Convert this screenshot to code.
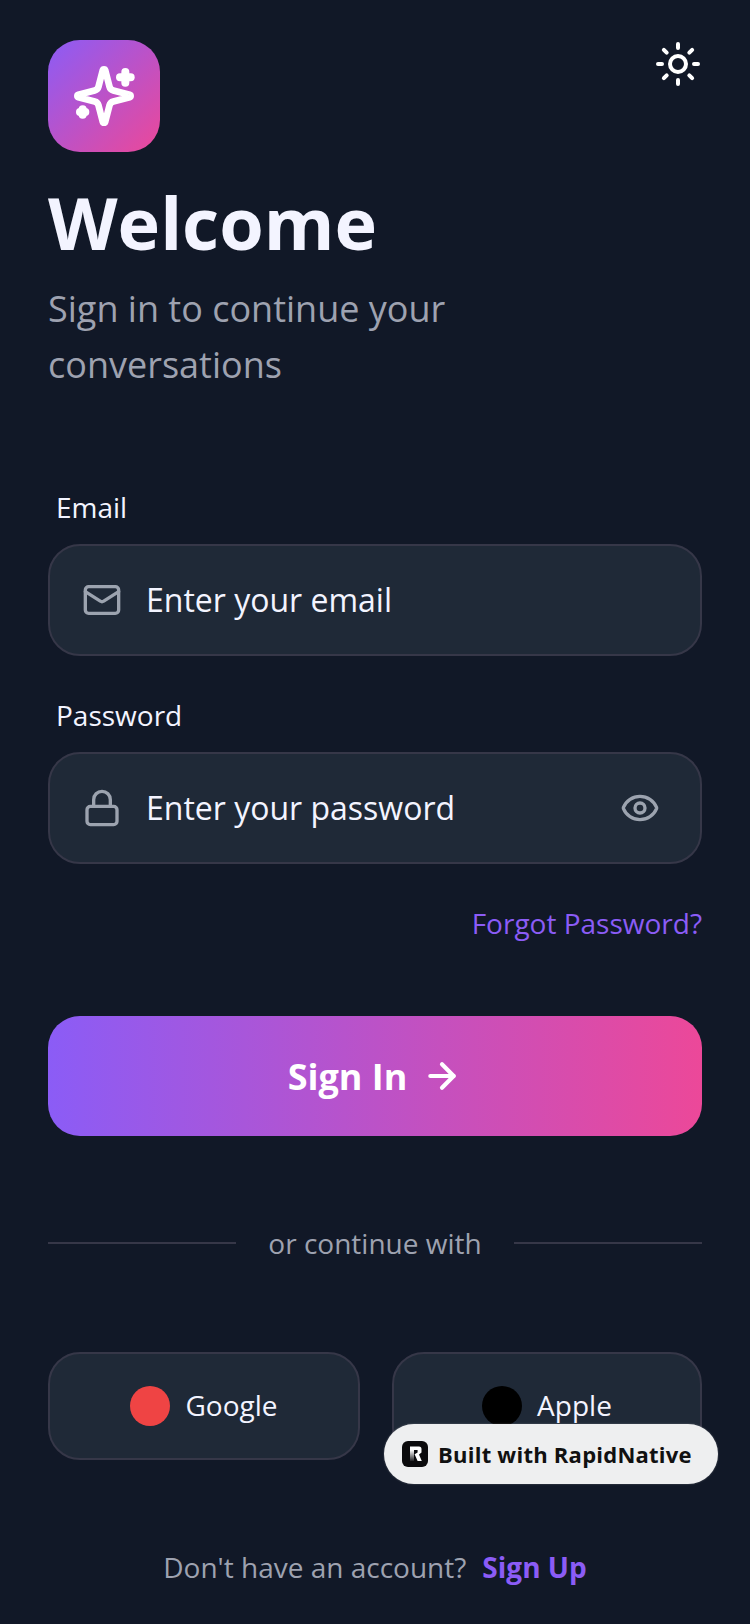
<script>
</script>

<div class="page">
  <div class="top">
    <div class="logo">
      <svg width="64" height="64" viewBox="0 0 24 24" fill="none" stroke="#fff" stroke-width="2.5" stroke-linecap="round" stroke-linejoin="round">
        <path d="M9.94 15.5A2 2 0 0 0 8.5 14.06l-6.14-1.58a.5.5 0 0 1 0-.96L8.5 9.94A2 2 0 0 0 9.94 8.5l1.58-6.14a.5.5 0 0 1 .96 0L14.06 8.5A2 2 0 0 0 15.5 9.94l6.14 1.58a.5.5 0 0 1 0 .96L15.5 14.06a2 2 0 0 0-1.44 1.44l-1.58 6.14a.5.5 0 0 1-.96 0z"/>
        <path d="M20 3v4" stroke-width="3"/><path d="M22 5h-4" stroke-width="3"/><path d="M4 17v2" stroke-width="3"/><path d="M5 18H3" stroke-width="3"/>
      </svg>
    </div>
    <svg width="48" height="48" viewBox="0 0 24 24" fill="none" stroke="#fff" stroke-width="2" stroke-linecap="round" stroke-linejoin="round">
      <circle cx="12" cy="12" r="4"/>
      <path d="M12 2v2M12 20v2M4.93 4.93l1.41 1.41M17.66 17.66l1.41 1.41M2 12h2M20 12h2M6.34 17.66l-1.41 1.41M19.07 4.93l-1.41 1.41"/>
    </svg>
  </div>

  <h1>Welcome</h1>
  <p class="sub">Sign in to continue your<br />conversations</p>

  <div class="form">
    <div class="label">Email</div>
    <div class="field">
      <svg width="40" height="40" viewBox="0 0 24 24" fill="none" stroke="#9ca3af" stroke-width="2" stroke-linecap="round" stroke-linejoin="round">
        <rect x="2" y="4" width="20" height="16" rx="2"/><path d="m22 7-8.97 5.7a1.94 1.94 0 0 1-2.06 0L2 7"/>
      </svg>
      <span class="ph">Enter your email</span>
    </div>
    <div class="label second">Password</div>
    <div class="field">
      <svg width="40" height="40" viewBox="0 0 24 24" fill="none" stroke="#9ca3af" stroke-width="2" stroke-linecap="round" stroke-linejoin="round">
        <rect x="3" y="11" width="18" height="11" rx="2"/><path d="M7 11V7a5 5 0 0 1 10 0v4"/>
      </svg>
      <span class="ph">Enter your password</span>
      <svg width="40" height="40" viewBox="0 0 24 24" fill="none" stroke="#9ca3af" stroke-width="2" stroke-linecap="round" stroke-linejoin="round">
        <path d="M2.06 12.35a1 1 0 0 1 0-.7 10.75 10.75 0 0 1 19.88 0 1 1 0 0 1 0 .7 10.75 10.75 0 0 1-19.88 0"/><circle cx="12" cy="12" r="3"/>
      </svg>
    </div>
    <div class="forgot">Forgot Password?</div>
  </div>

  <div class="signin">
    <span>Sign In</span>
    <svg width="40" height="40" viewBox="0 0 24 24" fill="none" stroke="#fff" stroke-width="2.5" stroke-linecap="round" stroke-linejoin="round">
      <path d="M5 12h14"/><path d="m12 5 7 7-7 7"/>
    </svg>
  </div>

  <div class="divider"><i></i><span>or continue with</span><i></i></div>

  <div class="social">
    <div class="sbtn"><b class="dot red"></b><span>Google</span></div>
    <div class="sbtn"><b class="dot black"></b><span>Apple</span></div>
  </div>

  <div class="foot"><span>Don't have an account?</span><strong>Sign Up</strong></div>

  <div class="badge">
    <svg width="26" height="26" viewBox="0 0 26 26">
      <defs>
        <linearGradient id="stem" x1="0" y1="0" x2="0" y2="1">
          <stop offset="0" stop-color="#fff" />
          <stop offset="1" stop-color="#fff" stop-opacity="0.1" />
        </linearGradient>
      </defs>
      <rect width="26" height="26" rx="6" fill="#0b0b0d"/>
      <path d="M8 9h4v11H8z" fill="url(#stem)"/>
      <path d="M8 5.500h9q2.500 0 2.500 2.500v3.500L17 13.500l2.800 6.500h-4.200l-3-6.800 3-1.700V9H8z" fill="#fff"/>
    </svg>
    <span>Built with RapidNative</span>
  </div>
</div>

<style>
  :global(body) {
    margin: 0;
    background: #111827;
  }
  .page {
    position: relative;
    width: 750px;
    height: 1624px;
    box-sizing: border-box;
    padding: 40px 48px 0;
    background: #111827;
    font-family: "Open Sans", "Noto Sans", sans-serif;
    color: #fff;
    overflow: hidden;
  }
  .top {
    display: flex;
    justify-content: space-between;
    align-items: flex-start;
  }
  .logo {
    width: 112px;
    height: 112px;
    border-radius: 32px;
    background: linear-gradient(135deg, #8b5cf6, #ec4899);
    display: flex;
    align-items: center;
    justify-content: center;
  }
  h1 {
    margin: 24px 0 0;
    font-size: 72px;
    line-height: 92px;
    font-weight: 700;
    color: #f3f4ff;
  }
  .sub {
    margin: 13px 0 0;
    font-size: 36px;
    line-height: 56px;
    color: #9ea2b0;
  }
  .form {
    margin-top: 94px;
  }
  .label {
    padding-left: 8px;
    font-size: 28px;
    line-height: 40px;
    color: #f3f4ff;
    margin-bottom: 17px;
  }
  .label.second {
    margin-top: 39px;
  }
  .field {
    display: flex;
    align-items: center;
    box-sizing: border-box;
    height: 112px;
    border: 2px solid #363748;
    border-radius: 32px;
    background: #1f2937;
    padding: 0 40px 0 32px;
    gap: 24px;
  }
  .ph {
    font-size: 32px;
    color: #f3f4ff;
    flex: 1;
    margin-bottom: 2px;
  }
  .forgot {
    margin-top: 39px;
    text-align: right;
    font-size: 28px;
    line-height: 40px;
    color: #8b5cf6;
  }
  .signin {
    margin-top: 73px;
    height: 120px;
    border-radius: 32px;
    background: linear-gradient(90deg, #8b5cf6, #ec4899);
    display: flex;
    align-items: center;
    justify-content: center;
    gap: 15px;
    font-size: 36px;
    font-weight: 700;
  }
  .divider {
    margin-top: 87px;
    display: flex;
    align-items: center;
    gap: 32px;
    font-size: 28px;
    line-height: 40px;
    color: #9ea2b0;
  }
  .divider i {
    flex: 1;
    height: 2px;
    background: #363748;
  }
  .social {
    margin-top: 89px;
    display: grid;
    grid-template-columns: 312px 310px;
    gap: 32px;
  }
  .sbtn {
    box-sizing: border-box;
    height: 108px;
    border: 2px solid #363748;
    border-radius: 32px;
    background: #1f2937;
    display: flex;
    align-items: center;
    justify-content: center;
    gap: 15px;
    font-size: 28px;
    color: #f3f4ff;
  }
  .sbtn span {
    margin-bottom: 2px;
  }
  .dot {
    width: 40px;
    height: 40px;
    border-radius: 50%;
  }
  .red {
    background: #ef4444;
  }
  .black {
    background: #000;
  }
  .foot {
    margin-top: 87px;
    display: flex;
    justify-content: center;
    gap: 16px;
    font-size: 28px;
    line-height: 40px;
    color: #9ea2b0;
  }
  .foot strong {
    color: #8b5cf6;
    font-weight: 700;
  }
  .badge {
    position: absolute;
    left: 384px;
    top: 1424px;
    width: 334px;
    height: 60px;
    box-sizing: border-box;
    border-radius: 30px;
    background: #eeeff0;
    display: flex;
    align-items: center;
    padding-left: 18px;
    gap: 10px;
    font-size: 22px;
    letter-spacing: 0.24px;
    font-weight: 700;
    color: #111;
    box-shadow: 0 0 2px rgba(255, 255, 255, 0.3);
  }
</style>
